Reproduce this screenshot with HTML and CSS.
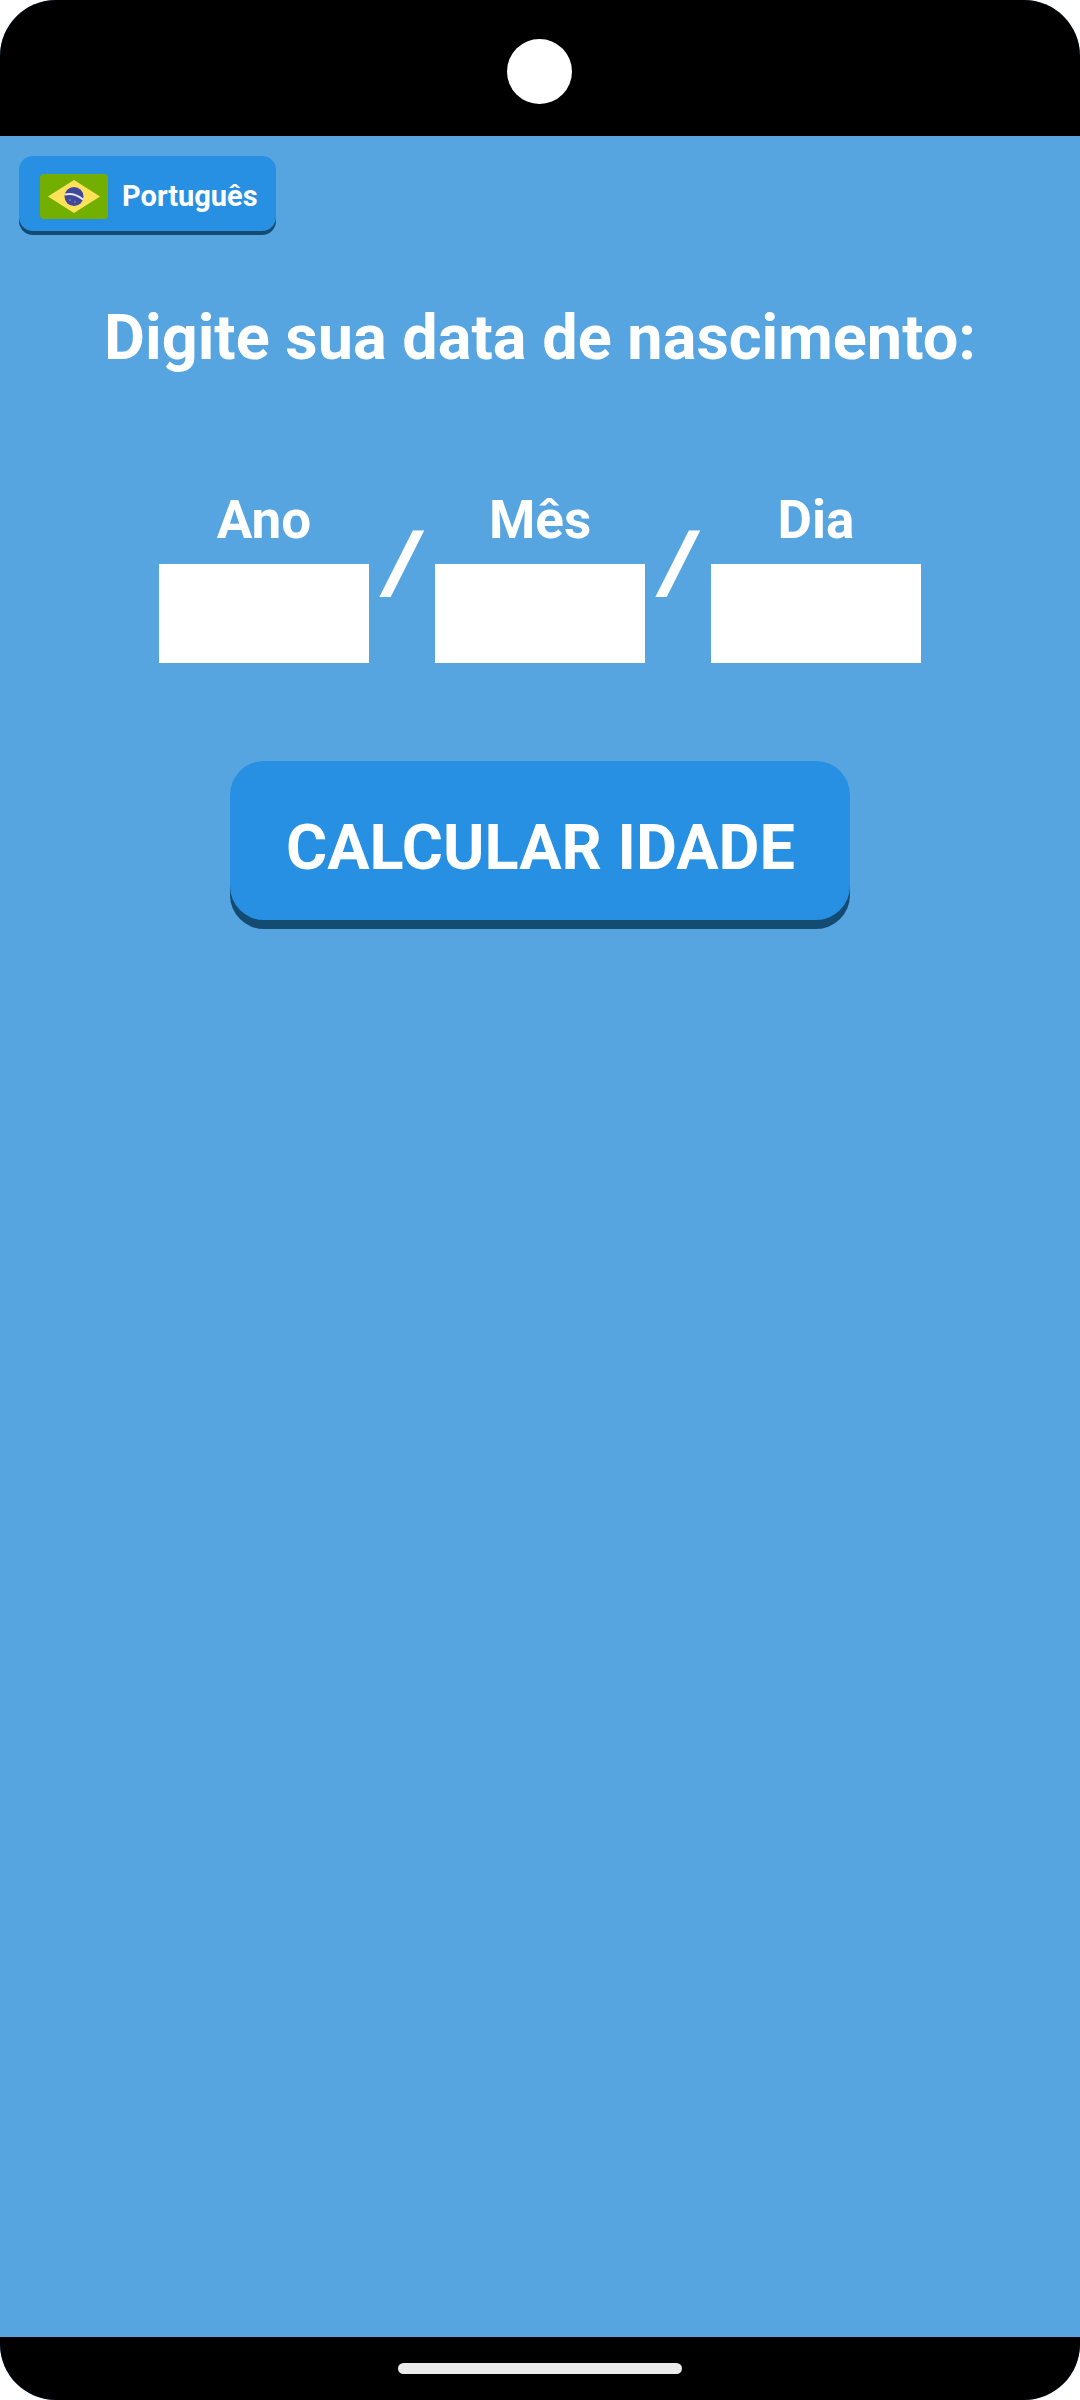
FILE: index.html
```html
<!DOCTYPE html>
<html lang="pt-BR">
<head>
<meta charset="utf-8">
<meta name="viewport" content="width=device-width, initial-scale=1">
<title>Calcular idade</title>
<link rel="stylesheet" href="styles.css">
</head>
<body>
<div class="screen">
  <header class="status-bar"><span class="camera"></span></header>
  <main class="content">
    <button class="btn language" type="button">
      <svg class="flag" viewBox="0 0 68 45" aria-hidden="true">
        <rect width="68" height="45" rx="4" fill="#73af00"/>
        <path d="M34 6 60 22.500 34 39 8 22.500Z" fill="#ffe15a"/>
        <circle cx="34" cy="22.500" r="9.500" fill="#41479b"/>
        <path d="M24.800 20.500Q34.500 18.500 43 25.500" fill="none" stroke="#e6e6f5" stroke-width="2"/>
        <circle cx="30" cy="26" r="1" fill="#7479b8"/>
        <circle cx="35" cy="28" r="1" fill="#7479b8"/>
      </svg>
      <span>Português</span>
    </button>
    <h1 class="title">Digite sua data de nascimento:</h1>
    <form class="form">
      <div class="date">
        <div class="field">
          <label class="label" for="year">Ano</label>
          <input class="input" id="year" type="text" inputmode="numeric">
        </div>
        <span class="slash">/</span>
        <div class="field">
          <label class="label" for="month">Mês</label>
          <input class="input" id="month" type="text" inputmode="numeric">
        </div>
        <span class="slash">/</span>
        <div class="field">
          <label class="label" for="day">Dia</label>
          <input class="input" id="day" type="text" inputmode="numeric">
        </div>
      </div>
      <button class="btn submit" type="button">CALCULAR IDADE</button>
    </form>
  </main>
  <footer class="nav-bar"><span class="handle"></span></footer>
</div>
</body>
</html>
```
FILE: styles.css
```css
* {
  box-sizing: border-box;
}

body {
  margin: 0;
  background: #fff;
  color: #fff;
  font-family: Roboto, sans-serif;
  font-weight: 700;
}

.screen {
  display: flex;
  flex-direction: column;
  min-height: 100vh;
  overflow: hidden;
  border-radius: 56px;
  background: #56a4e0;
}

.status-bar {
  display: flex;
  justify-content: center;
  align-items: center;
  height: 136px;
  padding: 7px 1px 0 0;
  background: #000;
}

.camera {
  width: 65px;
  height: 65px;
  border-radius: 50%;
  background: #fff;
}

.content {
  flex: 1;
  display: flex;
  flex-direction: column;
  padding-top: 20px;
}

.btn {
  border: 0;
  background: #2890e2;
  color: #fff;
  font-family: inherit;
  font-weight: 700;
}

.language {
  display: flex;
  align-items: center;
  align-self: flex-start;
  gap: 14px;
  height: 75px;
  margin-left: 19px;
  padding: 5px 18px 0 21px;
  border-radius: 14px;
  box-shadow: 0 4px 0 #144b73;
  font-size: 29px;
  line-height: 34px;
}

.flag {
  width: 68px;
  height: 45px;
}

.title {
  margin: 69px 0 0;
  font-size: 63px;
  line-height: 76px;
  text-align: center;
}

.form {
  display: flex;
  flex-direction: column;
  align-items: center;
  gap: 98px;
  margin-top: 113px;
}

.date {
  display: flex;
}

.field {
  display: flex;
  flex-direction: column;
  align-items: center;
  gap: 12px;
}

.label {
  font-size: 53px;
  line-height: 63px;
}

.input {
  width: 210px;
  height: 99px;
  padding: 0 16px;
  border: 0;
  border-radius: 0;
  background: #fff;
  color: #222;
  font: 400 48px Roboto, sans-serif;
  text-align: center;
}

.slash {
  width: 66px;
  padding-top: 25px;
  font-size: 84px;
  font-style: italic;
  line-height: 98px;
  text-align: center;
  -webkit-text-stroke: 2px #fff;
}

.submit {
  height: 159px;
  padding: 14px 55px 0 56px;
  border-radius: 34px;
  box-shadow: 0 9px 0 #144b73;
  font-size: 63px;
  line-height: 74px;
}

.nav-bar {
  display: flex;
  justify-content: center;
  align-items: center;
  height: 63px;
  background: #000;
}

.handle {
  width: 284px;
  height: 11px;
  border-radius: 6px;
  background: #ebebeb;
}
```
